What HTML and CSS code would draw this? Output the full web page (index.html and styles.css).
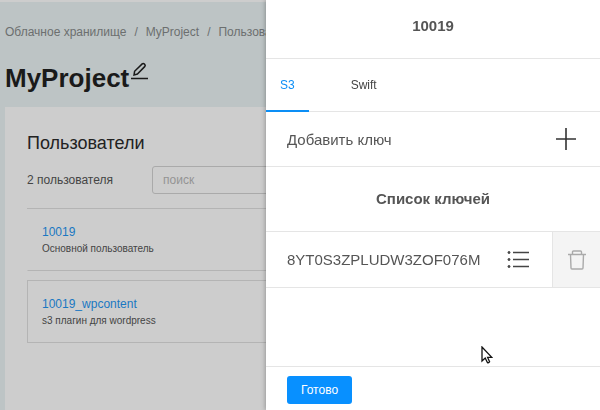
FILE: index.html
```html
<!DOCTYPE html>
<html lang="ru">
<head>
    <meta charset="UTF-8">
    <meta name="viewport" content="width=device-width, initial-scale=1.0">
    <title>MyProject</title>
    <link rel="stylesheet" href="styles.css">
</head>
<body>
    <div class="page">
        <nav class="breadcrumbs">
            <a href="#">Облачное хранилище</a>
            <span>/</span>
            <a href="#">MyProject</a>
            <span>/</span>
            <a href="#">Пользователи</a>
        </nav>
        <div class="title">
            <h1>MyProject</h1>
            <button class="icon-button" aria-label="Переименовать">
                <svg width="17" height="18" viewBox="0 0 17 18" fill="none" stroke="#1a1a1a" stroke-width="1.5">
                    <path d="M3 13L3.6 9.3L11.2 1.9Q12.2 1 13.5 2.1Q14.8 3.3 13.9 4.4L6.4 12Z"/>
                    <path d="M0 16.5H17"/>
                </svg>
            </button>
        </div>
        <main class="card">
            <h2>Пользователи</h2>
            <div class="toolbar">
                <label for="search">2 пользователя</label>
                <input type="text" id="search" placeholder="поиск">
            </div>
            <div class="user">
                <a href="#">10019</a>
                <p>Основной пользователь</p>
            </div>
            <div class="user user-active">
                <a href="#">10019_wpcontent</a>
                <p>s3 плагин для wordpress</p>
            </div>
        </main>
    </div>

    <aside class="drawer">
        <header class="drawer-header">10019</header>
        <div class="tabs">
            <button class="tab tab-active">S3</button>
            <button class="tab">Swift</button>
        </div>
        <div class="add-key">
            <span>Добавить ключ</span>
            <button class="icon-button" aria-label="Добавить ключ">
                <svg width="22" height="22" viewBox="0 0 22 22" stroke="#333" stroke-width="1.6">
                    <path d="M1 11H21M11 0V22"/>
                </svg>
            </button>
        </div>
        <h3>Список ключей</h3>
        <div class="key">
            <span class="key-name">8YT0S3ZPLUDW3ZOF076M</span>
            <button class="icon-button" aria-label="Подробнее">
                <svg width="22" height="20" viewBox="0 0 22 20" fill="#444" stroke="#444">
                    <path d="M6 2.5H22M6 9.5H22M6 16.5H22" stroke-width="1.6"/>
                    <circle cx="2" cy="2.5" r="1"/>
                    <circle cx="2" cy="9.5" r="1"/>
                    <circle cx="2" cy="16.5" r="1"/>
                </svg>
            </button>
            <button class="delete" aria-label="Удалить">
                <svg width="18" height="20" viewBox="0 0 18 20" fill="none" stroke="#aaa" stroke-width="1.4">
                    <path d="M0 4.5H18M4.5 4.5V2Q4.5 1 5.5 1H12.5Q13.5 1 13.5 2V4.5M2.5 4.5L3 18Q3 19 4 19H14Q15 19 15 18L15.5 4.5"/>
                </svg>
            </button>
        </div>
        <footer class="drawer-footer">
            <button class="done">Готово</button>
        </footer>
        <svg class="cursor" width="12" height="18" viewBox="0 0 12 18" fill="#fff" stroke="#111" stroke-width="1.3">
            <path d="M1 1V15L4.2 12L6.4 16.6Q7.8 17.2 8.6 15.8L6.6 11.4H10.8Z"/>
        </svg>
    </aside>
</body>
</html>
```
FILE: styles.css
```css
* {
    box-sizing: border-box;
}

body {
    font-family: "Liberation Sans", Arial, sans-serif;
    font-size: 12px;
    margin: 0;
    height: 100vh;
    overflow: hidden;
    background-color: #bdc4c5;
    color: #444;
}

h1, h2, h3, p {
    margin: 0;
}

a {
    text-decoration: none;
}

button {
    font-family: inherit;
    font-size: 12px;
    padding: 0;
    border: none;
    background: none;
    cursor: pointer;
}

.icon-button svg, .delete svg {
    display: block;
}

.page {
    display: flex;
    flex-direction: column;
    height: 100vh;
    padding-left: 5px;
    border-top: 2px solid #cdcdcd;
}

.breadcrumbs {
    display: flex;
    gap: 8px;
    padding-top: 20px;
    line-height: 20px;
    white-space: nowrap;
    color: #6c6f6f;
}

.breadcrumbs a {
    color: #6c6f6f;
}

.title {
    display: flex;
    align-items: flex-start;
    gap: 2px;
    padding: 20px 0 13px;
}

h1 {
    font-size: 26px;
    line-height: 32px;
    color: #1a1a1a;
}

.card {
    flex: 1;
    padding: 24px 22px;
    background-color: #cdcdcd;
}

h2 {
    font-size: 18px;
    font-weight: normal;
    line-height: 24px;
    color: #222;
}

.toolbar {
    display: flex;
    align-items: center;
    gap: 39px;
    padding: 11px 0 14px;
    border-bottom: 1px solid #b4b4b4;
}

.toolbar input {
    flex: 1;
    height: 28px;
    padding: 0 10px;
    font-family: inherit;
    font-size: 12px;
    border: 1px solid #aaa;
    border-radius: 3px;
    background: none;
}

.toolbar input::placeholder {
    color: #949494;
}

.user {
    padding: 14px 14px 13px;
    border: 1px solid transparent;
    border-width: 0 1px 1px;
    border-bottom-color: #b4b4b4;
}

.user a {
    display: block;
    line-height: 18px;
    color: #1a78c2;
}

.user p {
    font-size: 10px;
    line-height: 16px;
}

.user-active {
    margin-top: 9px;
    border: 1px solid #b4b4b4;
}

.drawer {
    position: fixed;
    top: 0;
    right: 0;
    bottom: 0;
    width: calc(50% + 34px);
    display: flex;
    flex-direction: column;
    background-color: #fff;
    box-shadow: -1px 0 4px rgba(0, 0, 0, 0.25);
    color: #555;
    font-size: 15px;
}

.drawer-header, h3 {
    font-size: 15px;
    font-weight: bold;
    text-align: center;
    border-bottom: 1px solid #e5e5e5;
}

.drawer-header {
    padding: 16px 0 22px;
    line-height: 20px;
}

h3 {
    line-height: 64px;
}

.tabs {
    display: flex;
    gap: 28px;
    height: 53px;
    border-bottom: 1px solid #e5e5e5;
}

.tab {
    height: 53px;
    padding: 0 14px;
    border-bottom: 2px solid transparent;
    color: #444;
}

.tab-active {
    border-color: #0c8ef5;
    color: #0c8ef5;
}

.add-key {
    display: flex;
    align-items: center;
    justify-content: space-between;
    height: 55px;
    padding: 0 23px 0 21px;
    border-bottom: 1px solid #e5e5e5;
}

.key {
    display: flex;
    align-items: center;
    height: 56px;
    padding-left: 21px;
    border-bottom: 1px solid #e5e5e5;
}

.key-name {
    flex: 1;
}

.delete {
    display: flex;
    align-items: center;
    justify-content: center;
    align-self: stretch;
    width: 48px;
    margin-left: 23px;
    border-left: 1px solid #e5e5e5;
    background-color: #f4f4f4;
}

.drawer-footer {
    margin-top: auto;
    padding: 9px 21px 6px;
    border-top: 1px solid #e5e5e5;
}

.done {
    display: block;
    height: 28px;
    padding: 0 14px;
    border-radius: 3px;
    background-color: #0890ff;
    color: #fff;
}

.cursor {
    position: absolute;
    left: 215px;
    top: 346px;
}
```
